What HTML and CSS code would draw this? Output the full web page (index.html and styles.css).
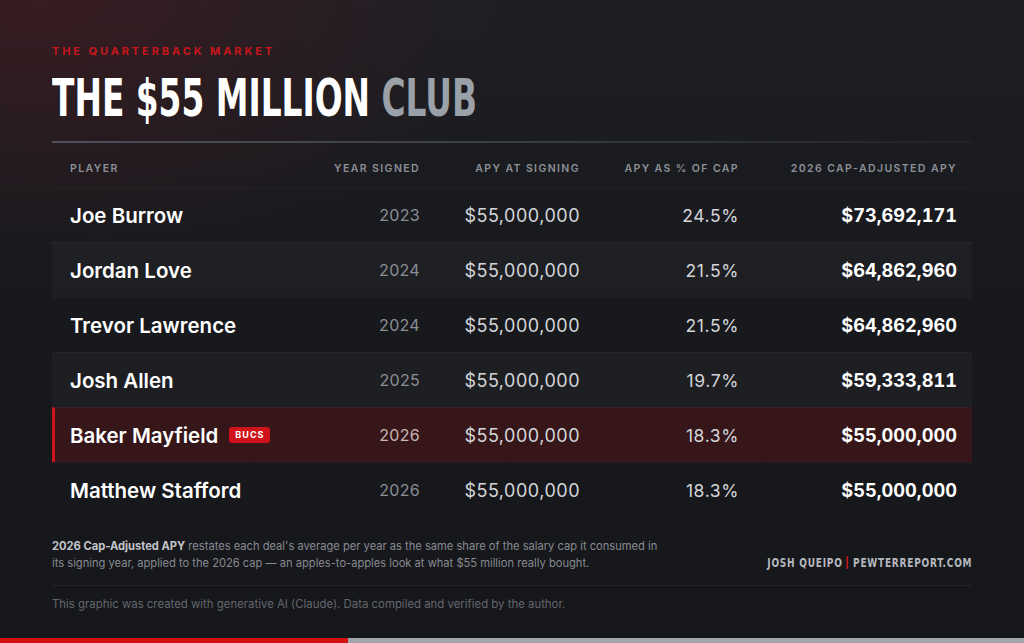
FILE: index.html
```html
<!DOCTYPE html>
<html>
<head>
<meta charset="utf-8">
<link rel="stylesheet" href="styles.css">
</head>
<body>
<div class="page">
  <div class="content">
    <div class="kicker">THE QUARTERBACK MARKET</div>
    <h1 class="title">THE $55 MILLION <span class="muted">CLUB</span></h1>
    <div class="rule"></div>
    <div class="table">
      <div class="row head">
        <div class="c name">PLAYER</div>
        <div class="c">YEAR SIGNED</div>
        <div class="c">APY AT SIGNING</div>
        <div class="c">APY AS % OF CAP</div>
        <div class="c">2026 CAP-ADJUSTED APY</div>
      </div>
      <div class="row">
        <div class="c name">Joe Burrow</div>
        <div class="c year">2023</div>
        <div class="c apy">$55,000,000</div>
        <div class="c pct">24.5%</div>
        <div class="c adj">$73,692,171</div>
      </div>
      <div class="row alt">
        <div class="c name">Jordan Love</div>
        <div class="c year">2024</div>
        <div class="c apy">$55,000,000</div>
        <div class="c pct">21.5%</div>
        <div class="c adj">$64,862,960</div>
      </div>
      <div class="row">
        <div class="c name">Trevor Lawrence</div>
        <div class="c year">2024</div>
        <div class="c apy">$55,000,000</div>
        <div class="c pct">21.5%</div>
        <div class="c adj">$64,862,960</div>
      </div>
      <div class="row alt">
        <div class="c name">Josh Allen</div>
        <div class="c year">2025</div>
        <div class="c apy">$55,000,000</div>
        <div class="c pct">19.7%</div>
        <div class="c adj">$59,333,811</div>
      </div>
      <div class="row hl">
        <div class="c name">Baker Mayfield <span class="badge">BUCS</span></div>
        <div class="c year">2026</div>
        <div class="c apy">$55,000,000</div>
        <div class="c pct">18.3%</div>
        <div class="c adj">$55,000,000</div>
      </div>
      <div class="row last">
        <div class="c name">Matthew Stafford</div>
        <div class="c year">2026</div>
        <div class="c apy">$55,000,000</div>
        <div class="c pct">18.3%</div>
        <div class="c adj">$55,000,000</div>
      </div>
    </div>
    <div class="foot">
      <p class="note"><span class="strong">2026 Cap-Adjusted APY</span> restates each deal's average per year as the same share of the salary cap it consumed in its signing year, applied to the 2026 cap — an apples-to-apples look at what $55 million really bought.</p>
      <div class="credit">JOSH QUEIPO<span class="sep"></span>PEWTERREPORT.COM</div>
    </div>
    <div class="disclaimer">This graphic was created with generative AI (Claude). Data compiled and verified by the author.</div>
  </div>
  <div class="bar"><span class="red"></span><span class="gray"></span></div>
</div>
</body>
</html>
```

FILE: styles.css
```css
* { box-sizing: border-box; margin: 0; padding: 0; }
html, body { width: 1024px; height: 643px; overflow: hidden; }
body {
  background: #17181c;
  font-family: Inter, "Liberation Sans", sans-serif;
  color: #fff;
}
.page {
  width: 1024px;
  height: 643px;
  display: flex;
  flex-direction: column;
  background:
    radial-gradient(ellipse 460px 260px at 40px 0px, rgba(110, 22, 28, 0.32), rgba(110, 22, 28, 0) 100%),
    linear-gradient(180deg, #1e1f24 0%, #18191d 45%, #16171b 100%);
}
.content {
  flex: 1;
  padding: 45px 52px 0 52px;
}
.kicker {
  color: #c8161b;
  font-size: 11px;
  font-weight: 700;
  letter-spacing: 2.9px;
  line-height: 13px;
}
.title {
  margin-top: 14px;
  font-family: "DejaVu Sans Condensed", "Liberation Sans", sans-serif;
  font-stretch: condensed;
  font-weight: 700;
  font-size: 52px;
  line-height: 52px;
  color: #fff;
  white-space: nowrap;
  transform: scaleX(0.702);
  transform-origin: left center;
}
.title .muted { color: #9ba1a8; }
.rule {
  margin-top: 17px;
  height: 2px;
  width: 920px;
  background: linear-gradient(90deg, #4d5058 0%, #3a3d44 50%, rgba(58, 61, 68, 0.2) 100%);
}
.table { width: 920px; }
.row {
  display: grid;
  grid-template-columns: 1fr 120px 160px 159px 218px;
  align-items: center;
  height: 55px;
  padding: 0 15px 0 18px;
  border-top: 1px solid rgba(255, 255, 255, 0.035);
}
.row.head {
  height: 44px;
  padding-top: 6px;
  border-top: none;
  font-size: 10.5px;
  font-weight: 600;
  letter-spacing: 1.4px;
  color: #8c9097;
}
.c { text-align: right; white-space: nowrap; }
.c.name { text-align: left; font-size: 20.5px; font-weight: 600; color: #fff; display: flex; align-items: center; }
.head .c.name { font-size: 10.5px; color: #8c9097; }
.row.alt { background: rgba(255, 255, 255, 0.028); }
.row.hl {
  background: #361618;
  border-left: 3px solid #d0141b;
  padding-left: 15px;
}
.year { font-size: 16px; color: #8b8e95; letter-spacing: 0.3px; }
.apy { font-size: 18px; color: #d3d5d9; letter-spacing: 0.5px; }
.pct { font-size: 17.5px; color: #d3d5d9; letter-spacing: 0.6px; }
.adj { font-size: 18.2px; font-weight: 700; color: #fff; font-variant-numeric: tabular-nums; }
.hl .year { color: #c9b5b6; }
.badge {
  margin-left: 11px;
  background: #d0121a;
  color: #fff;
  font-size: 9px;
  font-weight: 700;
  letter-spacing: 1px;
  line-height: 16px;
  height: 16px;
  padding: 0 6px;
  border-radius: 3px;
}
.foot {
  width: 920px;
  margin-top: 21px;
  display: flex;
  justify-content: space-between;
  align-items: flex-end;
  padding-bottom: 14px;
  border-bottom: 1px solid rgba(255, 255, 255, 0.06);
}
.note {
  width: 620px;
  font-size: 11.15px;
  line-height: 16.5px;
  color: #878a91;
}
.note .strong { color: #c3c5ca; font-weight: 700; }
.credit {
  font-family: "DejaVu Sans Condensed", "Liberation Sans", sans-serif;
  font-stretch: condensed;
  font-weight: 700;
  font-size: 13px;
  letter-spacing: 1px;
  color: #b4b8be;
  display: flex;
  align-items: center;
  padding-bottom: 1px;
  white-space: nowrap;
  transform: scaleX(0.77);
  transform-origin: right center;
}
.sep {
  display: inline-block;
  width: 2.5px;
  height: 13px;
  background: #c8161b;
  margin: 0 6px 0 5px;
}
.disclaimer {
  margin-top: 11px;
  font-size: 11.4px;
  color: #64676e;
}
.bar { display: flex; height: 5px; }
.bar .red { width: 348px; background: #d2100f; }
.bar .gray { flex: 1; background: #a0a5ab; }
```
